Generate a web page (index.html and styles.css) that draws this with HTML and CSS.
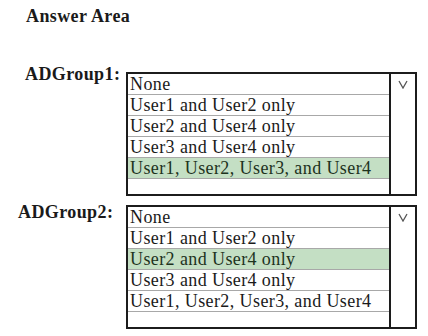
FILE: index.html
```html
<!DOCTYPE html>
<html lang="en">
<head>
    <meta charset="UTF-8">
    <meta name="viewport" content="width=device-width, initial-scale=1.0">
    <title>Answer Area</title>
    <link rel="stylesheet" href="styles.css">
</head>
<body>
    <h1 class="title">Answer Area</h1>

    <div class="group group-1">
        <div class="label">ADGroup1:</div>
        <div class="dropdown">
            <ul class="options">
                <li>None</li>
                <li>User1 and User2 only</li>
                <li>User2 and User4 only</li>
                <li>User3 and User4 only</li>
                <li class="selected">User1, User2, User3, and User4</li>
            </ul>
            <div class="arrow">
                <svg width="10" height="9" viewBox="0 0 10 9"><polyline points="1,1 5,8 9,1" fill="none" stroke="#555" stroke-width="1.3"/></svg>
            </div>
        </div>
    </div>

    <div class="group group-2">
        <div class="label">ADGroup2:</div>
        <div class="dropdown">
            <ul class="options">
                <li>None</li>
                <li>User1 and User2 only</li>
                <li class="selected">User2 and User4 only</li>
                <li>User3 and User4 only</li>
                <li>User1, User2, User3, and User4</li>
            </ul>
            <div class="arrow">
                <svg width="10" height="9" viewBox="0 0 10 9"><polyline points="1,1 5,8 9,1" fill="none" stroke="#555" stroke-width="1.3"/></svg>
            </div>
        </div>
    </div>
</body>
</html>
```

FILE: styles.css
```css
body {
    font-family: "Liberation Serif", "Times New Roman", serif;
    margin: 0;
    padding: 6px 0 0 0;
    background-color: #fff;
    color: #1a1a1a;
}
.title {
    font-size: 18px;
    font-weight: bold;
    line-height: 20px;
    letter-spacing: 0.4px;
    margin: 0 0 0 26px;
}
.group {
    display: grid;
    grid-template-columns: 126px 291px;
    align-items: start;
}
.group-1 {
    margin-top: 38px;
}
.group-2 {
    margin-top: 6px;
}
.label {
    font-size: 18px;
    font-weight: bold;
    line-height: 20px;
    letter-spacing: 0.4px;
}
.group-1 .label {
    padding-left: 25px;
}
.group-2 .label {
    padding-left: 18px;
}
.dropdown {
    display: flex;
    height: 124px;
    box-sizing: border-box;
    border: 2px solid #1c1c1c;
}
.group-1 .dropdown {
    margin-top: 8px;
}
.group-2 .dropdown {
    margin-top: 3px;
}
.options {
    flex: 1;
    list-style: none;
    margin: 0;
    padding: 0;
}
.options li {
    height: 21px;
    box-sizing: border-box;
    border-bottom: 1px solid #a8a8a8;
    padding-left: 2px;
    font-size: 18px;
    line-height: 20px;
    letter-spacing: 0.4px;
    white-space: nowrap;
}
.options li.selected {
    background-color: #c4dfc4;
    color: #1d321d;
}
.arrow {
    width: 24px;
    border-left: 2px solid #1c1c1c;
    display: flex;
    justify-content: center;
    padding-top: 6px;
}
.arrow svg {
    display: block;
}
```
